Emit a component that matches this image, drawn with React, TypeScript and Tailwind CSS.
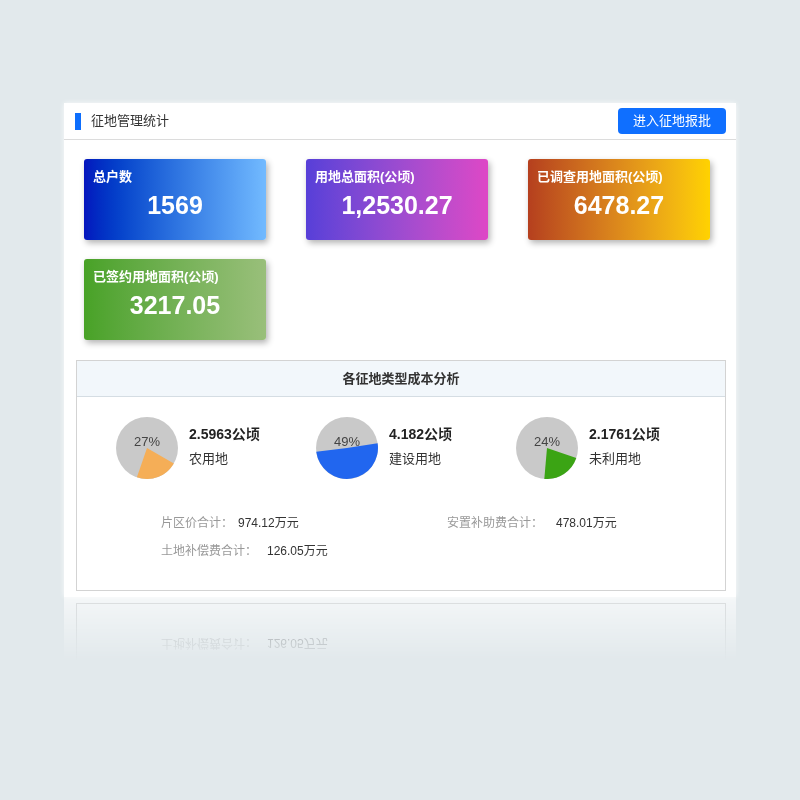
import React from "react";

const CARDS = [
  { title: "总户数", value: "1569", bg: "bg-gradient-to-r from-[#0514bd] to-[#72baff]" },
  { title: "用地总面积(公顷)", value: "1,2530.27", bg: "bg-gradient-to-r from-[#573fd8] to-[#de47c6]" },
  { title: "已调查用地面积(公顷)", value: "6478.27", bg: "bg-gradient-to-r from-[#b53f1e] to-[#ffd200]" },
  { title: "已签约用地面积(公顷)", value: "3217.05", bg: "bg-gradient-to-r from-[#48a226] to-[#99bf7a]" },
];

// start / end angles in degrees, clockwise from 12 o'clock
const PIES = [
  { pct: "27%", area: "2.5963公顷", name: "农用地", from: 120, to: 199, color: "#f5ae57" },
  { pct: "49%", area: "4.182公顷", name: "建设用地", from: 81, to: 263, color: "#2166ef" },
  { pct: "24%", area: "2.1761公顷", name: "未利用地", from: 109, to: 185, color: "#3ba414" },
];

function wedge(from: number, to: number, r: number) {
  const pt = (deg: number) => {
    const a = (deg * Math.PI) / 180;
    return `${(r + r * Math.sin(a)).toFixed(2)} ${(r - r * Math.cos(a)).toFixed(2)}`;
  };
  const large = to - from > 180 ? 1 : 0;
  return `M${r} ${r} L${pt(from)} A${r} ${r} 0 ${large} 1 ${pt(to)} Z`;
}

function Pie({ pct, from, to, color }: { pct: string; from: number; to: number; color: string }) {
  return (
    <svg width="62" height="62" viewBox="0 0 62 62" className="shrink-0">
      <circle cx="31" cy="31" r="31" fill="#c9c9c9" />
      <path d={wedge(from, to, 31)} fill={color} />
      <text x="31" y="29" textAnchor="middle" fontSize="13" fill="#444" fontFamily="Liberation Sans, sans-serif">
        {pct}
      </text>
    </svg>
  );
}

export default function App() {
  return (
    <div className="min-h-screen bg-[#e2e9ec] pt-[103px] font-['Liberation_Sans','Noto_Sans_CJK_SC',sans-serif]">
      <div className="mx-auto w-[672px] bg-white pb-[6px] shadow-[0_0_5px_rgba(255,255,255,0.8)] [-webkit-box-reflect:below_0px_linear-gradient(transparent_87%,rgba(255,255,255,0.6))]">
        {/* 标题栏 */}
        <div className="flex h-[37px] items-center justify-between border-b border-[#dcdcdc] pl-[11px] pr-[10px]">
          <div className="flex items-center">
            <span className="h-[17px] w-[6px] bg-[#0d6efd]" />
            <span className="ml-[10px] text-[13px] text-[#333]">征地管理统计</span>
          </div>
          <button className="h-[26px] w-[108px] rounded-[4px] bg-[#0f6fff] text-[13px] text-white">进入征地报批</button>
        </div>

        <div className="pl-[12px] pr-[10px] pt-[19px]">
          <div className="ml-[8px] grid grid-cols-[182px_182px_182px] gap-x-[40px] gap-y-[19px]">
            {CARDS.map((c) => (
              <div
                key={c.title}
                className={`h-[81px] rounded-[3px] px-[9px] pt-[9px] text-white shadow-[2px_3px_6px_rgba(0,0,0,0.3)] ${c.bg}`}
              >
                <div className="text-[13px] font-bold leading-[18px]">{c.title}</div>
                <div className="mt-[4px] text-center text-[25px] font-bold leading-[30px]">{c.value}</div>
              </div>
            ))}
          </div>

          {/* 成本分析 */}
          <div className="mt-[20px] border border-[#d3d3d3]">
            <div className="flex h-[36px] items-center justify-center border-b border-[#d5dde3] bg-[#f2f7fb] text-[13px] font-bold text-[#333]">
              各征地类型成本分析
            </div>
            <div className="flex pl-[39px] pt-[20px]">
              {PIES.map((p) => (
                <div key={p.name} className="flex w-[200px] items-start">
                  <Pie pct={p.pct} from={p.from} to={p.to} color={p.color} />
                  <div className="ml-[11px] pt-[7px]">
                    <div className="text-[14px] font-bold leading-[20px] text-[#222]">{p.area}</div>
                    <div className="mt-[5px] text-[13px] leading-[20px] text-[#333]">{p.name}</div>
                  </div>
                </div>
              ))}
            </div>
            <div className="mt-[30px] grid grid-cols-[286px_1fr] pb-[25px] pl-[84px] text-[12px] leading-[28px]">
              <div>
                <span className="text-[#999]">片区价合计：</span>
                <span className="ml-[5px] text-[#333]">974.12万元</span>
              </div>
              <div>
                <span className="text-[#999]">安置补助费合计：</span>
                <span className="ml-[13px] text-[#333]">478.01万元</span>
              </div>
              <div>
                <span className="text-[#999]">土地补偿费合计：</span>
                <span className="ml-[10px] text-[#333]">126.05万元</span>
              </div>
            </div>
          </div>
        </div>
      </div>
    </div>
  );
}
